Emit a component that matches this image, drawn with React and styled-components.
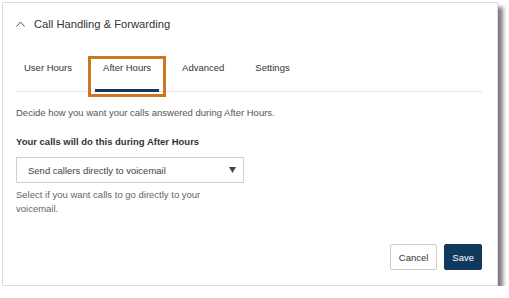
import React from 'react'
import styled, { createGlobalStyle } from 'styled-components'

const GlobalStyle = createGlobalStyle`
  html, body {
    margin: 0;
    padding: 0;
    background: #ffffff;
  }
  body {
    font-family: "Liberation Sans", Arial, sans-serif;
    color: #333;
  }
`

const Page = styled.div`
  padding: 2px 0 0 2px;
`

const Card = styled.section`
  box-sizing: border-box;
  width: 496px;
  height: 284px;
  background: #fff;
  border: 1px solid #dcdcdc;
  box-shadow: 5px 5px 4px rgba(0, 0, 0, 0.5);
  display: flex;
  flex-direction: column;
  padding: 0 15px 15px 13px;
`

const Header = styled.div`
  height: 41px;
  display: flex;
  align-items: center;
  gap: 9px;
  font-size: 11.2px;
  color: #333;
`

const Tabs = styled.div`
  display: flex;
  gap: 15px;
  height: 47px;
  border-bottom: 1px solid #e4e4e4;
`

const Tab = styled.div`
  position: relative;
  box-sizing: border-box;
  padding: 2px 8px 0;
  margin-bottom: -1px;
  display: flex;
  align-items: center;
  font-size: 9.5px;
  color: #333;
  border-bottom: 3px solid ${p => (p.$active ? '#15395a' : 'transparent')};
`

const Highlight = styled.span`
  position: absolute;
  left: -7px;
  right: -7px;
  top: 12px;
  bottom: -8px;
  border: 3px solid #cc7628;
  pointer-events: none;
`

const Intro = styled.p`
  margin: 14px 0 0;
  font-size: 9.5px;
  line-height: 14px;
  color: #555;
`

const Label = styled.div`
  margin-top: 15px;
  font-size: 9.5px;
  line-height: 14px;
  font-weight: bold;
  color: #333;
`

const SelectBox = styled.div`
  box-sizing: border-box;
  margin-top: 8px;
  width: 228px;
  height: 26px;
  border: 1px solid #cfcfcf;
  display: flex;
  align-items: center;
  justify-content: space-between;
  padding: 0 7px 0 11px;
  font-size: 9.5px;
  color: #444;
`

const Help = styled.p`
  margin: 5px 0 0;
  width: 215px;
  font-size: 9.5px;
  line-height: 14px;
  color: #666;
`

const Footer = styled.div`
  margin-top: auto;
  display: flex;
  justify-content: flex-end;
  gap: 7px;
`

const Button = styled.button`
  box-sizing: border-box;
  height: 26px;
  padding: 0 ${p => (p.$primary ? '7px' : '8px')};
  font-family: "Liberation Sans", Arial, sans-serif;
  font-size: 9.5px;
  border-radius: 2px;
  border: 1px solid ${p => (p.$primary ? '#0f3a5d' : '#cccccc')};
  background: ${p => (p.$primary ? '#0f3a5d' : '#ffffff')};
  color: ${p => (p.$primary ? '#ffffff' : '#333333')};
  cursor: pointer;
`

const tabs = ['User Hours', 'After Hours', 'Advanced', 'Settings']

const App = () => {
  return (
    <Page>
      <GlobalStyle />
      <Card>
        <Header>
          <svg width="9" height="6" viewBox="0 0 9 6">
            <polyline points="0.5,5.5 4.5,1 8.5,5.5" fill="none" stroke="#555" strokeWidth="1" />
          </svg>
          <span>Call Handling &amp; Forwarding</span>
        </Header>
        <Tabs>
          {tabs.map(t => (
            <Tab key={t} $active={t === 'After Hours'}>
              {t}
              {t === 'After Hours' && <Highlight />}
            </Tab>
          ))}
        </Tabs>
        <Intro>Decide how you want your calls answered during After Hours.</Intro>
        <Label>Your calls will do this during After Hours</Label>
        <SelectBox>
          <span>Send callers directly to voicemail</span>
          <svg width="7" height="6" viewBox="0 0 7 6">
            <polygon points="0,0 7,0 3.5,6" fill="#444" />
          </svg>
        </SelectBox>
        <Help>Select if you want calls to go directly to your voicemail.</Help>
        <Footer>
          <Button>Cancel</Button>
          <Button $primary>Save</Button>
        </Footer>
      </Card>
    </Page>
  )
}

export default App
